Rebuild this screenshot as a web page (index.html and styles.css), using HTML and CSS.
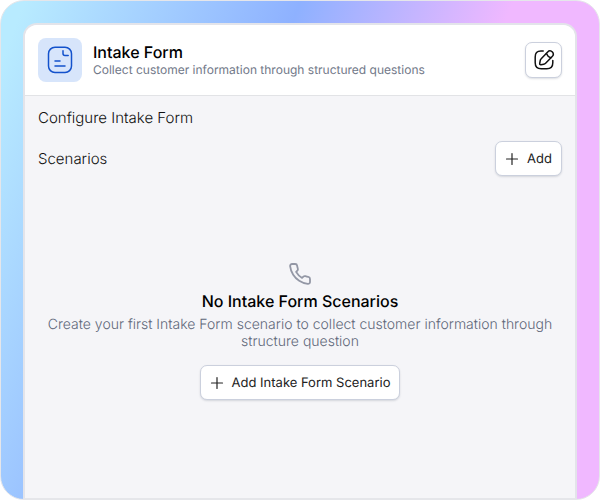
FILE: index.html
```html
<!DOCTYPE html>
<html lang="en">
<head>
<meta charset="utf-8">
<meta name="viewport" content="width=device-width, initial-scale=1">
<title>Intake Form</title>
<link rel="stylesheet" href="styles.css">
</head>
<body>
<div class="frame">
  <main class="panel">
    <header class="header">
      <span class="badge">
        <svg width="26" height="28" viewBox="0 0 26 28" fill="none" stroke="#1352cc" stroke-width="1.5" stroke-linecap="round" stroke-linejoin="round" aria-hidden="true">
          <rect x="1.500" y="1.200" width="23" height="25.300" rx="6.500"/>
          <path d="M16 4.800v2.700a2 2 0 0 0 2 2h3.200M8 14.900h5M8 20h10"/>
        </svg>
      </span>
      <div class="heading">
        <h1 class="title">Intake Form</h1>
        <p class="subtitle">Collect customer information through structured questions</p>
      </div>
      <button class="button button-icon" type="button" aria-label="Edit">
        <svg width="22" height="22" viewBox="0 0 22 22" fill="none" stroke="#111" stroke-width="1.5" stroke-linecap="round" stroke-linejoin="round" aria-hidden="true">
          <path d="M10.200 2H8C3.800 2 2.200 3.800 2.200 8v5.700c0 4.300 1.800 6 6 6h5.600c4.300 0 6-1.700 6-6V11.500"/>
          <path d="M14.700 2.900 8.200 9.700c-.6.600-.9 1.200-1 1.900l-.5 2.900c-.1.900.4 1.300 1.200 1.200l2.800-.5c.7-.1 1.400-.5 1.900-1l6.600-6.700c1.300-1.300 1.700-2.700.2-4.400s-3.300-1.700-4.700-.2Z"/>
          <path d="M13.400 4.400c.8 2.100 2.100 3.500 4.400 4.300"/>
        </svg>
      </button>
    </header>
    <section class="content">
      <h2 class="label">Configure Intake Form</h2>
      <div class="row">
        <h3 class="label">Scenarios</h3>
        <button class="button" type="button">
          <svg width="14" height="14" viewBox="0 0 14 14" stroke="#222" stroke-width="1.2" stroke-linecap="round" aria-hidden="true"><path d="M7 1.500v11M1.500 7h11"/></svg>
          Add
        </button>
      </div>
      <div class="empty">
        <svg width="24" height="24" viewBox="0 0 24 24" fill="none" stroke="#9397a5" stroke-width="1.8" stroke-linecap="round" stroke-linejoin="round" aria-hidden="true">
          <path d="M22 16.920v3a2 2 0 0 1-2.180 2 19.790 19.790 0 0 1-8.630-3.070 19.500 19.500 0 0 1-6-6 19.790 19.790 0 0 1-3.070-8.670A2 2 0 0 1 4.110 2h3a2 2 0 0 1 2 1.720c.127.960.361 1.903.7 2.810a2 2 0 0 1-.45 2.110L8.090 9.910a16 16 0 0 0 6 6l1.270-1.270a2 2 0 0 1 2.110-.45c.907.339 1.850.573 2.810.7A2 2 0 0 1 22 16.920z"/>
        </svg>
        <h3 class="title">No Intake Form Scenarios</h3>
        <p class="description">Create your first Intake Form scenario to collect customer information through structure question</p>
        <button class="button" type="button">
          <svg width="14" height="14" viewBox="0 0 14 14" stroke="#222" stroke-width="1.2" stroke-linecap="round" aria-hidden="true"><path d="M7 1.500v11M1.500 7h11"/></svg>
          Add Intake Form Scenario
        </button>
      </div>
    </section>
  </main>
</div>
</body>
</html>
```
FILE: styles.css
```css
* {
  box-sizing: border-box;
}

body {
  margin: 0;
  background: #fff;
  color: #222;
  font-family: Inter, "Liberation Sans", sans-serif;
  text-rendering: geometricPrecision;
}

h1, h2, h3, p {
  margin: 0;
}

svg {
  display: block;
  flex: none;
}

.frame {
  display: flex;
  min-height: 100vh;
  padding: 22px 22px 0;
  border: 1px solid #e5e6ea;
  border-radius: 24px;
  background: linear-gradient(111deg, #b8ebff 3%, #8eb1ff 38%, #f0b8ff 65%);
}

.panel {
  display: flex;
  flex: 1;
  flex-direction: column;
  overflow: hidden;
  border: 2px solid #e3e4ea;
  border-bottom: 1px solid #e5e6ea;
  border-radius: 14px 14px 0 0;
  background: #f5f5f8;
}

.header {
  display: flex;
  align-items: center;
  gap: 11px;
  padding: 13px;
  border-bottom: 1px solid #e2e3e6;
  background: #fff;
}

.badge {
  display: grid;
  place-items: center;
  width: 44px;
  height: 44px;
  border-radius: 8px;
  background: #d7e5fb;
}

.heading {
  flex: 1;
}

.title {
  color: #000;
  font-size: 16px;
  font-weight: 500;
  line-height: 20px;
}

.subtitle {
  color: #717888;
  font-size: 12px;
  line-height: 16px;
}

.button {
  display: flex;
  align-items: center;
  gap: 8px;
  height: 35px;
  padding: 0 9px;
  border: 1px solid #cbd0dd;
  border-radius: 7px;
  background: #fff;
  box-shadow: 0 1px 2px rgb(30 40 70 / 15%);
  color: #222;
  font: 400 13px/16px Inter, "Liberation Sans", sans-serif;
  text-rendering: inherit;
}

.button-icon {
  justify-content: center;
  width: 37px;
  height: 36px;
  padding: 0;
}

.content {
  display: flex;
  flex: 1;
  flex-direction: column;
  gap: 13px;
  padding: 12px 13px;
}

.label {
  color: #111;
  font-size: 15px;
  font-weight: 300;
  line-height: 20px;
}

.row {
  display: flex;
  align-items: center;
  justify-content: space-between;
}

.empty {
  display: flex;
  flex-direction: column;
  align-items: center;
  padding-top: 73px;
}

.empty .title {
  margin-top: 5px;
}

.description {
  margin: 5px 0 15px;
  color: #606778;
  font-size: 14px;
  font-weight: 300;
  line-height: 17px;
  text-align: center;
}
```
